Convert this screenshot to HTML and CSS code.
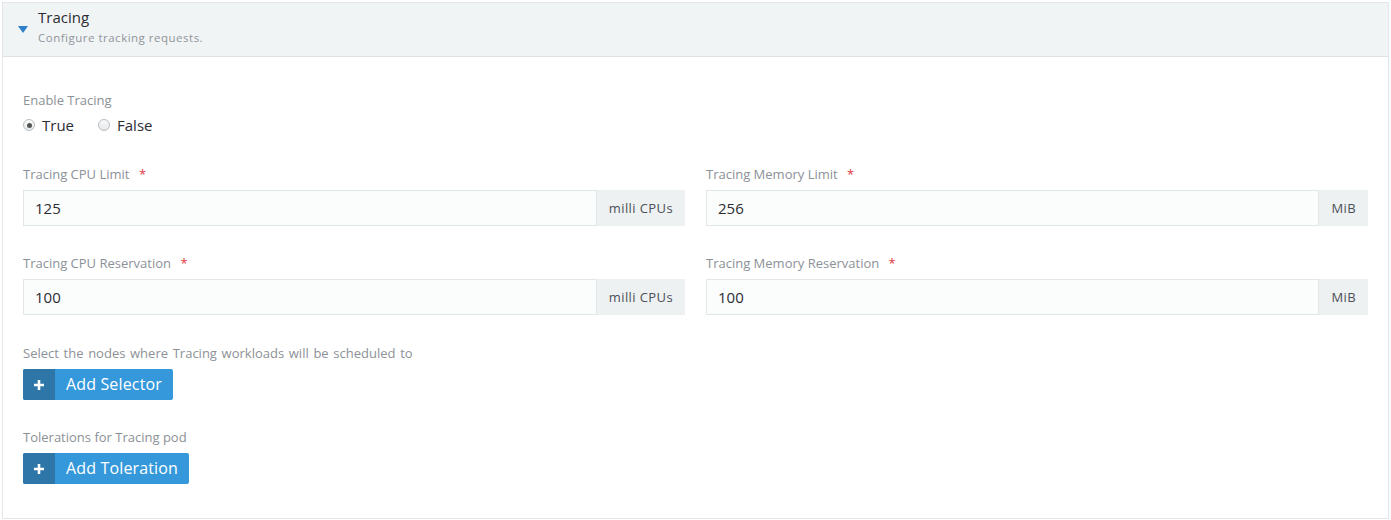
FILE: index.html
```html
<!DOCTYPE html>
<html>
<head>
<meta charset="utf-8">
<link rel="stylesheet" href="styles.css">
</head>
<body>
<div class="panel">
  <div class="head">
    <span class="caret"></span>
    <div class="head-text">
      <div class="title">Tracing</div>
      <div class="sub">Configure tracking requests.</div>
    </div>
  </div>
  <div class="body">
    <div class="group">
      <div class="label">Enable Tracing</div>
      <div class="radios">
        <label class="radio"><span class="dot on"></span>True</label>
        <label class="radio"><span class="dot"></span>False</label>
      </div>
    </div>
    <div class="grid">
      <div class="field">
        <div class="label">Tracing CPU Limit <span class="req">*</span></div>
        <div class="ig"><div class="input">125</div><div class="addon">milli CPUs</div></div>
      </div>
      <div class="field">
        <div class="label">Tracing Memory Limit <span class="req">*</span></div>
        <div class="ig"><div class="input">256</div><div class="addon">MiB</div></div>
      </div>
      <div class="field">
        <div class="label">Tracing CPU Reservation <span class="req">*</span></div>
        <div class="ig"><div class="input">100</div><div class="addon">milli CPUs</div></div>
      </div>
      <div class="field">
        <div class="label">Tracing Memory Reservation <span class="req">*</span></div>
        <div class="ig"><div class="input">100</div><div class="addon">MiB</div></div>
      </div>
    </div>
    <div class="group btn-group">
      <div class="label wide">Select the nodes where Tracing workloads will be scheduled to</div>
      <button class="btn"><span class="plus"><svg width="12" height="12" viewBox="0 0 12 12"><path d="M6 1v10M1 6h10" stroke="#fff" stroke-width="2.6"/></svg></span><span class="btxt">Add Selector</span></button>
    </div>
    <div class="group btn-group">
      <div class="label">Tolerations for Tracing pod</div>
      <button class="btn"><span class="plus"><svg width="12" height="12" viewBox="0 0 12 12"><path d="M6 1v10M1 6h10" stroke="#fff" stroke-width="2.6"/></svg></span><span class="btxt">Add Toleration</span></button>
    </div>
  </div>
</div>
</body>
</html>
```

FILE: styles.css
```css
* { box-sizing: border-box; }
body { margin: 0; background: #fff; font-family: "Open Sans", Lato, sans-serif; color: #2b2d33; }
.panel { margin: 2px 2px 0 2px; width: 1387px; height: 517px; border: 1px solid #e3e7e9; }
.head { height: 54px; background: #f1f4f5; border-bottom: 1px solid #dde3e5; display: flex; align-items: flex-start; padding-left: 15px; }
.caret { width: 0; height: 0; border-left: 5px solid transparent; border-right: 5px solid transparent; border-top: 7px solid #2e7fc8; margin-top: 23px; margin-right: 10px; }
.head-text { padding-top: 4px; }
.title { font-size: 15px; line-height: 20px; color: #2b2d33; }
.sub { font-size: 11.5px; line-height: 16px; color: #8e949a; margin-top: 3px; letter-spacing: 0.5px; }
.body { padding: 34px 20px 0 20px; }
.label { font-size: 13px; line-height: 18px; color: #8c9197; }
.label.wide { word-spacing: 1.3px; }
.req { color: #e0393e; margin-left: 6px; }
.radios { display: flex; gap: 24px; margin-top: 6px; }
.radio { display: flex; align-items: center; font-size: 15px; line-height: 20px; color: #2b2d33; }
.dot { width: 12px; height: 12px; border-radius: 50%; border: 1px solid #b9bec2; background: linear-gradient(#fafafa, #e6e8ea); margin-right: 7px; position: relative; }
.dot.on::after { content: ""; position: absolute; left: 2.5px; top: 2.5px; width: 5px; height: 5px; border-radius: 50%; background: #555; }
.grid { display: grid; grid-template-columns: 1fr 1fr; column-gap: 21px; row-gap: 28px; margin-top: 30px; }
.field .label { margin-bottom: 7px; }
.ig { display: flex; height: 36px; }
.input { flex: 1; border: 1px solid #e2e7e8; background: #fbfcfc; font-size: 15px; line-height: 34px; padding-left: 11px; color: #2b2d33; }
.addon { background: #eef1f2; font-size: 13px; line-height: 36px; color: #4c5058; padding: 0 12px; letter-spacing: 0.4px; }
.btn-group { margin-top: 29px; }
.btn-group .label { margin-bottom: 7px; }
.btn-group + .btn-group { margin-top: 28px; }
.btn { display: flex; height: 31px; border: 0; padding: 0; border-radius: 2px; background: #3598db; color: #fff; font-family: inherit; cursor: pointer; overflow: hidden; }
.plus { width: 32px; height: 31px; background: #2e75a8; display: flex; align-items: center; justify-content: center; }
.btxt { font-size: 16px; line-height: 31px; padding: 0 11px 0 11px; letter-spacing: 0.15px; }
```
